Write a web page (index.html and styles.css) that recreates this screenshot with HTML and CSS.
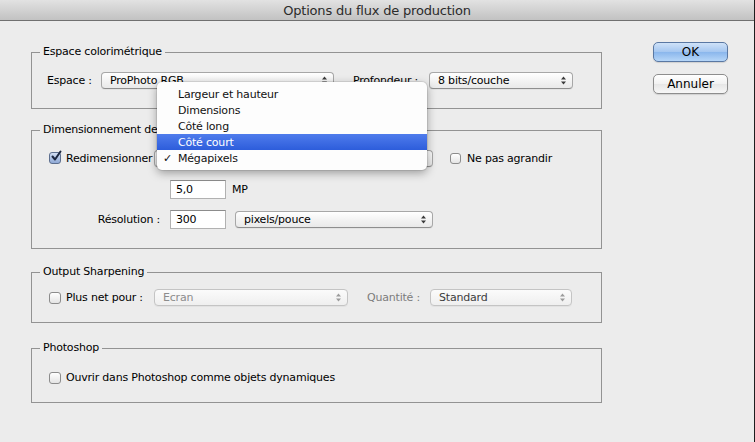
FILE: index.html
```html
<!DOCTYPE html>
<html lang="fr">
<head>
<meta charset="utf-8">
<title>Options du flux de production</title>
<link rel="stylesheet" href="styles.css">
</head>
<body>
<div class="window">
  <div class="titlebar">Options du flux de production</div>
  <div class="content">
    <div class="main">
      <fieldset class="group g-color">
        <legend>Espace colorimétrique</legend>
        <div class="gbody pb-color">
          <div class="row h17">
            <span class="lbl w-espace">Espace :</span>
            <div class="select w-space"><span class="val">ProPhoto RGB</span><svg class="arrows" width="5" height="9" viewBox="0 0 5 9"><path d="M2.5 0.5 L5 3.5 H0 Z M0 5.5 H5 L2.5 8.5 Z"/></svg></div>
            <span class="lbl w-prof">Profondeur :</span>
            <div class="select w-depth"><span class="val">8 bits/couche</span><svg class="arrows" width="5" height="9" viewBox="0 0 5 9"><path d="M2.5 0.5 L5 3.5 H0 Z M0 5.5 H5 L2.5 8.5 Z"/></svg></div>
          </div>
        </div>
      </fieldset>

      <fieldset class="group g-size">
        <legend>Dimensionnement de l'image</legend>
        <div class="gbody pb-size">
          <div class="row h18">
            <label class="check w-lead"><span class="box checked"><svg width="13" height="13" viewBox="0 0 13 13"><path d="M2.5 6.5 L5 9.5 L10.5 1.5" fill="none" stroke="#1c2740" stroke-width="2" stroke-linecap="round" stroke-linejoin="round"/></svg></span>Redimensionner</label>
            <div class="select w-mode"><span class="val">Mégapixels</span><svg class="arrows" width="5" height="9" viewBox="0 0 5 9"><path d="M2.5 0.5 L5 3.5 H0 Z M0 5.5 H5 L2.5 8.5 Z"/></svg></div>
            <label class="check ml-agr"><span class="box small"></span>Ne pas agrandir</label>
          </div>
          <div class="row h19 mt-mp">
            <span class="lbl col-label"></span>
            <div class="input">5,0</div>
            <span class="unit">MP</span>
          </div>
          <div class="row h19 mt-res">
            <span class="lbl col-label">Résolution :</span>
            <div class="input">300</div>
            <div class="select w-unit"><span class="val">pixels/pouce</span><svg class="arrows" width="5" height="9" viewBox="0 0 5 9"><path d="M2.5 0.5 L5 3.5 H0 Z M0 5.5 H5 L2.5 8.5 Z"/></svg></div>
          </div>
        </div>
      </fieldset>

      <fieldset class="group g-sharp">
        <legend>Output Sharpening</legend>
        <div class="gbody pb-sharp">
          <div class="row h17">
            <label class="check w-lead"><span class="box"></span>Plus net pour :</label>
            <div class="select disabled w-ecran"><span class="val">Ecran</span><svg class="arrows" width="5" height="9" viewBox="0 0 5 9"><path d="M2.5 0.5 L5 3.5 H0 Z M0 5.5 H5 L2.5 8.5 Z"/></svg></div>
            <span class="lbl dim w-qte">Quantité :</span>
            <div class="select disabled strong w-std"><span class="val">Standard</span><svg class="arrows" width="5" height="9" viewBox="0 0 5 9"><path d="M2.5 0.5 L5 3.5 H0 Z M0 5.5 H5 L2.5 8.5 Z"/></svg></div>
          </div>
        </div>
      </fieldset>

      <fieldset class="group g-ps">
        <legend>Photoshop</legend>
        <div class="gbody pb-ps">
          <div class="row h17">
            <label class="check"><span class="box"></span>Ouvrir dans Photoshop comme objets dynamiques</label>
          </div>
        </div>
      </fieldset>
    </div>

    <div class="buttons">
      <div class="btn ok">OK</div>
      <div class="btn">Annuler</div>
    </div>
  </div>

  <div class="menu">
    <div class="item"><span class="tick"></span>Largeur et hauteur</div>
    <div class="item"><span class="tick"></span>Dimensions</div>
    <div class="item"><span class="tick"></span>Côté long</div>
    <div class="item active"><span class="tick"></span>Côté court</div>
    <div class="item"><span class="tick">✓</span>Mégapixels</div>
  </div>
</div>
</body>
</html>
```

FILE: styles.css
```css
html, body {
  margin: 0;
  padding: 0;
}

body {
  background: #ececec;
  font-family: "DejaVu Sans", "Liberation Sans", sans-serif;
  font-size: 11px;
  letter-spacing: -0.2px;
  color: #000;
}

.window {
  position: relative;
  width: 755px;
  height: 442px;
  box-sizing: border-box;
  border-right: 1px solid #1e1e1e;
  background: #ececec;
  overflow: hidden;
}

.titlebar {
  height: 20px;
  line-height: 21px;
  text-align: center;
  font-size: 13px;
  color: #2b2b2b;
  background: linear-gradient(#e2e2e2, #c2c2c2);
  border-bottom: 1px solid #707070;
}

.content {
  display: flex;
  gap: 51px;
  padding-left: 31px;
}

.main {
  width: 571px;
  display: flex;
  flex-direction: column;
}

.group {
  margin: 0;
  padding: 0;
  min-width: 0;
  border: 1px solid #939393;
}

.group legend {
  margin-left: 8px;
  padding: 0 3px;
  height: 14px;
  line-height: 14px;
}

.g-color { margin-top: 24px; }
.g-size { margin-top: 14px; }
.g-sharp { margin-top: 16px; }
.g-ps { margin-top: 18px; }

.gbody {
  padding-left: 15px;
}

.pb-color { padding-top: 13px; padding-bottom: 19px; }
.pb-size { padding-top: 12px; padding-bottom: 19px; }
.pb-sharp { padding-top: 10px; padding-bottom: 16px; }
.pb-ps { padding-top: 14px; padding-bottom: 16px; }

.row {
  display: flex;
  align-items: center;
}

.h17 { height: 17px; }
.h18 { height: 18px; }
.h19 { height: 19px; }
.mt-mp { margin-top: 13px; }
.mt-res { margin-top: 11px; }

.lbl {
  white-space: nowrap;
  overflow: hidden;
}

.dim { color: #7c7c7c; }

.w-espace { width: 54px; }
.w-prof { width: 76px; margin-left: 19px; }
.w-qte { width: 63px; margin-left: 19px; }

.col-label {
  width: 123px;
  box-sizing: border-box;
  padding-right: 10px;
  text-align: right;
}

.select {
  height: 17px;
  box-sizing: border-box;
  display: flex;
  align-items: center;
  justify-content: space-between;
  padding: 0 6px 0 8px;
  border: 1px solid #a7a7a7;
  border-bottom-color: #8e8e8e;
  border-radius: 4px;
  background: linear-gradient(#ffffff, #f1f1f1 60%, #e9e9e9);
  box-shadow: 0 1px 0 rgba(0, 0, 0, 0.04);
  white-space: nowrap;
}

.select .arrows {
  fill: #3a3a3a;
  flex: none;
}

.select.disabled {
  border-color: #c4c4c4;
  background: linear-gradient(#fbfbfb, #efefef);
  color: #8c8c8c;
}

.select.disabled .arrows { fill: #9c9c9c; }
.select.strong { color: #3c3c3c; }

.w-space { width: 233px; }
.w-depth { width: 144px; }
.w-mode { width: 279px; }
.w-unit { width: 198px; margin-left: 9px; }
.w-ecran { width: 194px; }
.w-std { width: 142px; }

.input {
  width: 56px;
  height: 19px;
  box-sizing: border-box;
  border: 1px solid #b1b1b1;
  border-top-color: #8c8c8c;
  background: #fff;
  padding-left: 5px;
  line-height: 17px;
}

.unit { margin-left: 6px; }

.check {
  display: flex;
  align-items: center;
  white-space: nowrap;
}

.w-lead { width: 107px; }
.ml-agr { margin-left: 17px; }

.box {
  width: 12px;
  height: 12px;
  box-sizing: border-box;
  margin: 0 5px 0 2px;
  border: 1px solid #8c8c8c;
  border-radius: 3px;
  background: linear-gradient(#ffffff, #e4e4e4);
  position: relative;
  flex: none;
}

.box.small {
  width: 11px;
  height: 11px;
  margin-left: 0;
  margin-right: 6px;
}

.box.checked {
  border-color: #5d6f8f;
  background: linear-gradient(#d2def2, #8fa9d6);
}

.box.checked svg {
  position: absolute;
  left: 0;
  top: -3px;
}

.buttons {
  display: flex;
  flex-direction: column;
  gap: 12px;
  padding-top: 21px;
}

.btn {
  width: 75px;
  height: 20px;
  box-sizing: border-box;
  border: 1px solid #8d8d8d;
  border-radius: 5px;
  background: linear-gradient(#ffffff, #f1f1f1 50%, #e6e6e6 51%, #f7f7f7);
  font-size: 12px;
  letter-spacing: 0;
  line-height: 18px;
  text-align: center;
  box-shadow: 0 1px 1px rgba(0, 0, 0, 0.12);
}

.btn.ok {
  border-color: #5a78a3;
  background: linear-gradient(#cfe2f8, #a4c6f0 50%, #8ab6ec 51%, #b6d6f8);
}

.menu {
  position: absolute;
  left: 157px;
  top: 82px;
  width: 270px;
  box-sizing: border-box;
  padding: 4px 0;
  background: #fdfdfd;
  border-radius: 5px;
  box-shadow: 0 3px 10px rgba(0, 0, 0, 0.35), 0 0 0 1px rgba(0, 0, 0, 0.08);
}

.item {
  height: 16px;
  line-height: 17px;
  display: flex;
  padding-left: 6px;
  white-space: nowrap;
  color: #111;
}

.tick {
  width: 15px;
  flex: none;
  font-size: 11px;
}

.item.active {
  background: linear-gradient(#4f7cec, #2d5ddb);
  color: #fff;
}
```
